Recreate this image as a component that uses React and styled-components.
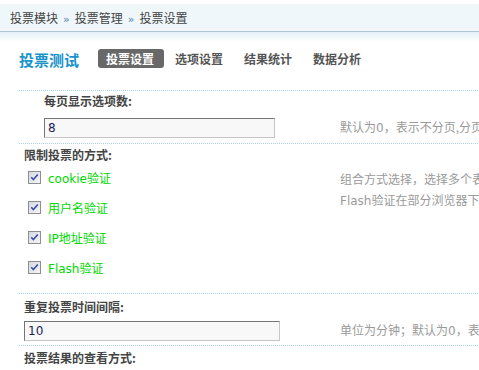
import React from "react";
import styled, { createGlobalStyle } from "styled-components";

const GlobalStyle = createGlobalStyle`
	html, body {
		margin: 0;
		padding: 0;
		background: #fff;
		overflow: hidden;
	}
	body {
		font-family: "DejaVu Sans", "Noto Sans CJK SC", sans-serif;
		font-size: 12px;
		color: #444;
	}
`;

const Page = styled.div`
	width: 760px;
	padding-top: 4px;
`;

const Crumbs = styled.div`
	height: 27px;
	line-height: 27px;
	padding-left: 10px;
	background: #eff7fb;
	border-bottom: 1px solid #adc6d5;
	color: #444;
	font-size: 12px;
	font-family: "Noto Sans CJK SC", sans-serif;
	white-space: nowrap;
`;

const Arrow = styled.span`
	margin: 0 5px;
	color: #5b7fae;
	font-family: "DejaVu Sans", sans-serif;
	font-size: 11px;
`;

const Shade = styled.div`
	height: 10px;
	background: linear-gradient(#e4f1f8, #fff);
`;

const TabBar = styled.div`
	display: flex;
	align-items: center;
	height: 19px;
	padding: 7px 0 0 19px;
	margin-bottom: 22px;
`;

const Title = styled.div`
	width: 79px;
	font-size: 15px;
	font-weight: bold;
	color: #1893cc;
	font-family: "Noto Sans CJK SC", sans-serif;
	line-height: 19px;
	padding-top: 2px;
`;

const Tabs = styled.div`
	display: flex;
	gap: 3px;
`;

const Tab = styled.div`
	width: 66px;
	height: 19px;
	line-height: 19px;
	box-sizing: border-box;
	padding-left: 8px;
	border-radius: 3px;
	font-weight: bold;
	font-family: "Noto Sans CJK SC", sans-serif;
	font-size: 12px;
	background: ${(p) => (p.$active ? "#686868" : "transparent")};
	color: ${(p) => (p.$active ? "#fff" : "#555")};
`;

const Form = styled.div`
	margin-left: 19px;
`;

const Row = styled.div`
	border-top: 1px dotted #a9d6ee;
	padding-bottom: ${(p) => p.$bottom || 0}px;
`;

const Label = styled.div`
	height: 20px;
	line-height: 20px;
	padding-top: ${(p) => p.$top || 0}px;
	padding-left: ${(p) => p.$indent}px;
	font-weight: bold;
	font-family: "Noto Sans CJK SC", sans-serif;
	color: #444;
`;

const Body = styled.div`
	display: grid;
	grid-template-columns: 321px auto;
	align-items: ${(p) => (p.$top ? "start" : "center")};
	margin-top: ${(p) => p.$gap || 0}px;
`;

const Control = styled.div`
	padding-left: ${(p) => p.$indent}px;
`;

const Help = styled.div`
	color: #9a9a9a;
	line-height: ${(p) => p.$line || 20}px;
	white-space: nowrap;
	padding-top: ${(p) => p.$top || 0}px;
	font-family: "Noto Sans CJK SC", sans-serif;
`;

const Num = styled.span`
	font-family: "DejaVu Sans", sans-serif;
`;

const TextInput = styled.input`
	display: block;
	box-sizing: border-box;
	width: ${(p) => p.$width}px;
	height: 20px;
	margin: 0;
	padding: 0 0 0 3px;
	background: #f8f8f8;
	border-style: solid;
	border-width: 1px;
	border-color: #747474 #c6c6c6 #c6c6c6 #747474;
	font-family: "DejaVu Sans", sans-serif;
	font-size: 12px;
	color: #1c1c5c;
	outline: none;
`;

const Options = styled.div`
	display: flex;
	flex-direction: column;
	margin-top: -3px;
	padding-left: 4px;
`;

const Option = styled.label`
	display: flex;
	align-items: center;
	height: 30px;
	gap: 7px;
	color: #00d800;
	font-family: "DejaVu Sans", "Noto Sans CJK SC", sans-serif;
	font-size: 12px;
`;

const Box = styled.span`
	display: inline-flex;
	width: 13px;
	height: 13px;
`;

function Check() {
	return (
		<Box>
			<svg width="13" height="13" viewBox="0 0 13 13">
				<defs>
					<linearGradient id="cbg" x1="0" y1="0" x2="1" y2="1">
						<stop offset="0" stopColor="#d6d8e0" />
						<stop offset="1" stopColor="#f6f6f8" />
					</linearGradient>
				</defs>
				<rect x="0.5" y="0.5" width="12" height="12" fill="url(#cbg)" stroke="#8e8e8e" />
				<path d="M3.2 6.2 L5.4 8.6 L9.8 3.4" fill="none" stroke="#3a50a8" strokeWidth="1.6" />
			</svg>
		</Box>
	);
}

const ways = ["cookie验证", "用户名验证", "IP地址验证", "Flash验证"];

export default function App() {
	return (
		<Page>
			<GlobalStyle />
			<Crumbs>
				投票模块<Arrow>»</Arrow>投票管理<Arrow>»</Arrow>投票设置
			</Crumbs>
			<Shade />
			<TabBar>
				<Title>投票测试</Title>
				<Tabs>
					<Tab $active>投票设置</Tab>
					<Tab>选项设置</Tab>
					<Tab>结果统计</Tab>
					<Tab>数据分析</Tab>
				</Tabs>
			</TabBar>
			<Form>
				<Row $bottom={5}>
					<Label $indent={25}>每页显示选项数:</Label>
					<Body $gap={6}>
						<Control $indent={25}>
							<TextInput $width={231} defaultValue="8" />
						</Control>
						<Help>
							默认为<Num>0</Num>，表示不分页,分页显示每页的选项数目
						</Help>
					</Body>
				</Row>
				<Row $bottom={11}>
					<Label $indent={5} $top={1}>
						限制投票的方式:
					</Label>
					<Body $top>
						<Control $indent={5}>
							<Options>
								{ways.map((w) => (
									<Option key={w}>
										<Check />
										{w}
									</Option>
								))}
							</Options>
						</Control>
						<Help $top={3} $line={21}>
							组合方式选择，选择多个表示同时满足
							<br />
							<Num>Flash</Num>验证在部分浏览器下可能无效
						</Help>
					</Body>
				</Row>
				<Row $bottom={4}>
					<Label $indent={5} $top={3}>
						重复投票时间间隔:
					</Label>
					<Body $gap={3}>
						<Control $indent={5}>
							<TextInput $width={256} defaultValue="10" />
						</Control>
						<Help>
							单位为分钟；默认为<Num>0</Num>，表示不限制
						</Help>
					</Body>
				</Row>
				<Row>
					<Label $indent={5} $top={2}>
						投票结果的查看方式:
					</Label>
				</Row>
			</Form>
		</Page>
	);
}
